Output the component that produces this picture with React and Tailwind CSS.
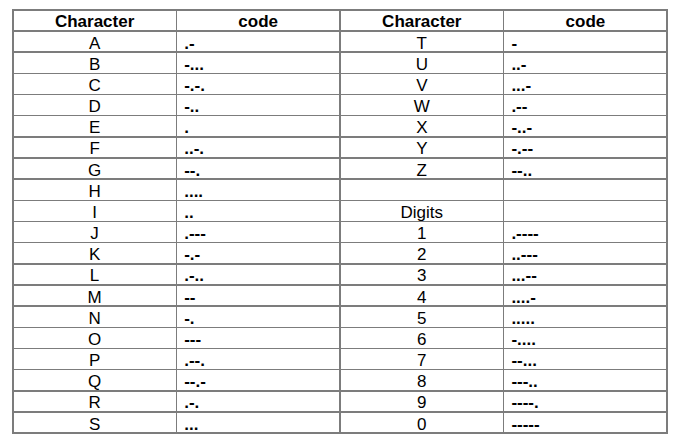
import React from "react";

const left = [
  ["A", ".-"], ["B", "-..."], ["C", "-.-."], ["D", "-.."], ["E", "."],
  ["F", "..-."], ["G", "--."], ["H", "...."], ["I", ".."], ["J", ".---"],
  ["K", "-.-"], ["L", ".-.."], ["M", "--"], ["N", "-."], ["O", "---"],
  ["P", ".--."], ["Q", "--.-"], ["R", ".-."], ["S", "..."],
];
const right = [
  ["T", "-"], ["U", "..-"], ["V", "...-"], ["W", ".--"], ["X", "-..-"],
  ["Y", "-.--"], ["Z", "--.."], ["", ""], ["Digits", ""], ["1", ".----"],
  ["2", "..---"], ["3", "...--"], ["4", "....-"], ["5", "....."], ["6", "-...."],
  ["7", "--..."], ["8", "---.."], ["9", "----."], ["0", "-----"],
];

function Head({ children }) {
  return (
    <div className="bg-white flex items-center justify-center font-bold text-[17px] leading-none pt-[3px]">
      {children}
    </div>
  );
}

function Char({ children }) {
  return (
    <div className="bg-white flex items-center justify-center text-[17px] leading-none pt-[3px]">
      {children}
    </div>
  );
}

function Code({ children }) {
  return (
    <div className="bg-white flex items-center pl-[7px] font-bold text-[17px] leading-none pt-[3px]">
      {children}
    </div>
  );
}

export default function App() {
  return (
    <div className="w-[683px] h-[447px] bg-white pt-[9px] pl-[12px]" style={{ fontFamily: '"Liberation Sans", Arial, sans-serif' }}>
      <div className="w-[656px] h-[425px] bg-[#7c7c7c] p-[1.6px] grid grid-cols-4 grid-rows-[repeat(20,minmax(0,1fr))] gap-[1.6px] text-black">
        <Head>Character</Head>
        <Head>code</Head>
        <Head>Character</Head>
        <Head>code</Head>
        {left.map((l, i) => (
          <React.Fragment key={i}>
            <Char>{l[0]}</Char>
            <Code>{l[1]}</Code>
            <Char>{right[i][0]}</Char>
            <Code>{right[i][1]}</Code>
          </React.Fragment>
        ))}
      </div>
    </div>
  );
}
